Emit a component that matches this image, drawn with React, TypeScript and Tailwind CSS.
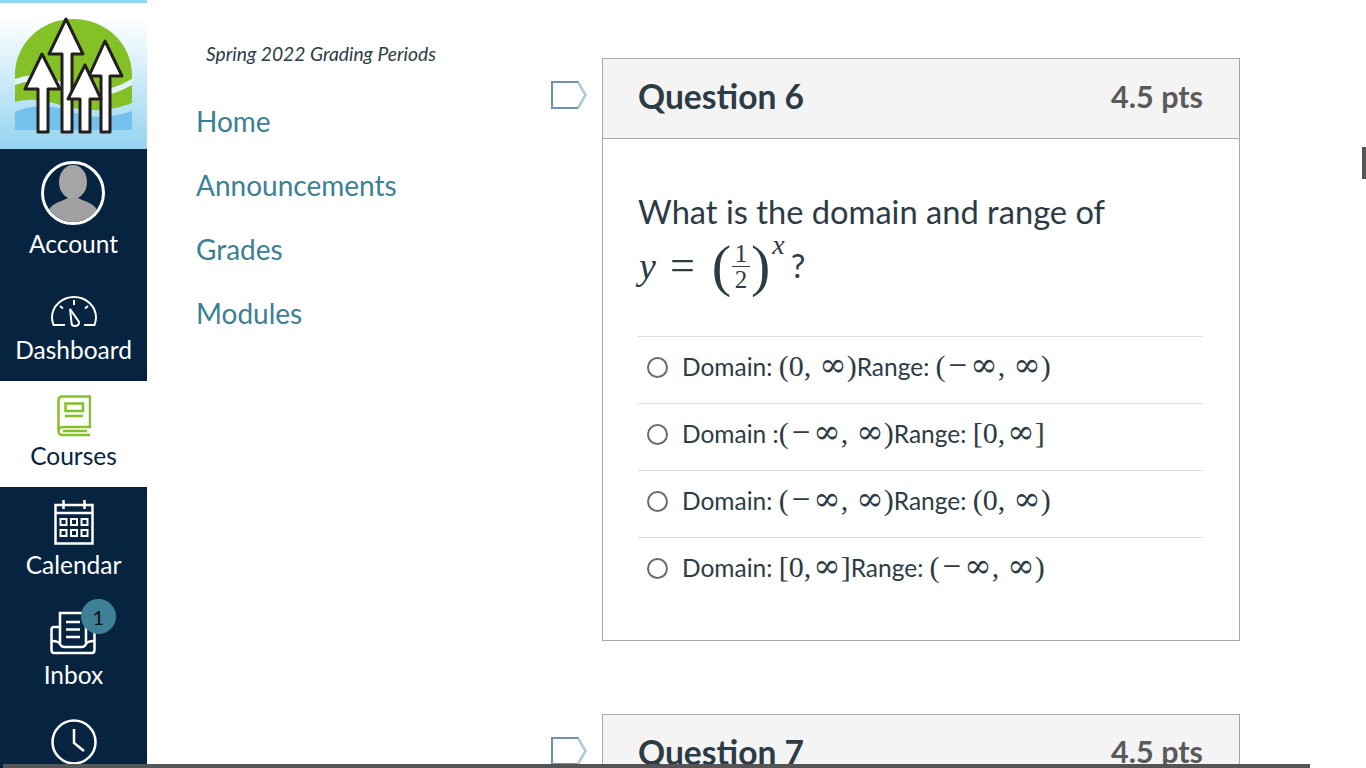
import React from 'react';

const Logo = () => (
    <svg width="147" height="146" viewBox="0 3 147 146">
        <path d="M15 102 V75 C15 45 40 19 73 19 C107 19 132 45 132 75 V103 C110 112 85 112 60 105 C45 100 30 98 15 102 Z" fill="#84c126" />
        <path d="M15 79 C35 71 55 78 72 87 C92 95 112 90 132 79 L132 85 C112 96 92 101 72 93 C55 84 35 77 15 85 Z" fill="#e2f3fb" />
        <path d="M15 112 C35 103 55 106 72 112 C92 119 112 118 132 111 V130 H15 Z" fill="#74c2ec" />
        <g fill="#fff" stroke="#231f20" strokeWidth="3" strokeLinejoin="round">
            <path d="M66 19 L83 54 H72 V132 H62 V54 L49 54 Z" />
            <path d="M105 41 L122 76 H110 V132 H101 V76 L89 76 Z" />
            <path d="M42 54 L60 89 H48 V132 H38 V89 L25 89 Z" />
            <path d="M85 65 L101 99 H90 V132 H80 V99 L68 99 Z" />
        </g>
    </svg>
);

const DashboardIcon = () => (
    <svg width="46" height="32" viewBox="0 0 46 32" fill="none" stroke="#fff" strokeWidth="2">
        <path d="M14 30 H2.500 C1.500 27 1 25 1 22.500 C1 11 11 2 23 2 C35 2 45 11 45 22.500 C45 25 44.500 27 43.500 30 H33" />
        <path d="M19 14 L28 27 C28.500 30 26 31 24 31 C21.500 31 20.500 29.500 20.500 27.500 Z" />
        <path d="M23 5 V10 M9 11 L12 13.500 M37 11 L34 13.500" />
    </svg>
);

const BookIcon = () => (
    <svg width="34" height="42" viewBox="0 0 34 42" fill="none" stroke="#84c126" strokeWidth="2.500">
        <path d="M1.500 35 V5 C1.500 3 3 1.500 5 1.500 H33 V32 H6 C3 32 1.500 34 1.500 36 C1.500 39 3 40 6 40 H33" />
        <path d="M8.500 8.500 H26 V16 H8.500 Z" />
        <path d="M8 21 H26 M6 36 H30" />
    </svg>
);

const CalendarIcon = () => (
    <svg width="40" height="46" viewBox="0 0 40 46" fill="none" stroke="#fff" strokeWidth="2.500">
        <path d="M1.500 6 H38.500 V44.500 H1.500 Z" />
        <path d="M9.500 1 V10 M30.500 1 V10 M1.500 14 H38.500" />
        <g strokeWidth="2">
            <rect x="6.500" y="20" width="6" height="6" />
            <rect x="17" y="20" width="6" height="6" />
            <rect x="27.500" y="20" width="6" height="6" />
            <rect x="6.500" y="31" width="6" height="6" />
            <rect x="17" y="31" width="6" height="6" />
            <rect x="27.500" y="31" width="6" height="6" />
        </g>
    </svg>
);

const InboxIcon = () => (
    <svg width="46" height="44" viewBox="0 0 46 44" fill="none" stroke="#fff" strokeWidth="2.500">
        <path d="M10 32 V2 H36 V32" />
        <path d="M9 16 H4 C2.500 16 1.500 17 1.500 18.500 V39 C1.500 41 2.500 42 4 42 H42 C43.500 42 44.500 41 44.500 39 V18.500 C44.500 17 43.500 16 42 16 H37" />
        <path d="M2 30 C6 30 9 31 10 33 C11 35 12 36 14 36 H32 C34 36 35 35 36 33 C37 31 40 30 44 30" />
        <path d="M16 11 H30 M16 18.500 H30 M16 26 H30" />
    </svg>
);

const ClockIcon = () => (
    <svg width="46" height="46" viewBox="0 0 46 46" fill="none" stroke="#fff" strokeWidth="2.500">
        <circle cx="23" cy="23" r="21.500" />
        <path d="M23 10 V24 L33 32" />
    </svg>
);

const Avatar = () => (
    <div className="w-[64px] h-[64px] rounded-full border-[3px] border-white overflow-hidden bg-[#06243f]">
        <svg width="58" height="58" viewBox="0 0 58 58">
            <ellipse cx="29" cy="18" rx="14" ry="17" fill="#a6a6a6" />
            <path d="M3 50 C6 39 16 38 24 34 H34 C42 38 52 39 55 50 L55 58 H3 Z" fill="#a0a0a0" />
        </svg>
    </div>
);

const Tag = () => (
    <svg width="36" height="28" viewBox="0 0 36 28" fill="none" className="mt-[23px] shrink-0">
        <path d="M1 1 H27 L34.500 14 L27 27 H1 Z" stroke="#6d93ad" strokeWidth="2" />
        <path d="M27 1 L34.500 14 L27 27" stroke="#b4cbdb" strokeWidth="2" />
    </svg>
);

const M = ({ children }: { children: React.ReactNode }) => (
    <span className="font-['Liberation_Serif',serif] text-[30px] leading-none">{children}</span>
);

const Inf = () => <span className="font-['DejaVu_Serif',serif] text-[33px] leading-none">∞</span>;

const Minus = () => <span className="font-['Liberation_Serif',serif] text-[33px] leading-none px-[3px]">−</span>;

const Comma = () => <span className="mr-[8px]">,</span>;

const TightComma = () => <span className="mr-[2px]">,</span>;

const answers = [
    <><span>Domain:&nbsp;</span><M>(0<Comma /><Inf />)</M><span>Range:&nbsp;</span><M>(<Minus /><Inf /><Comma /><Inf />)</M></>,
    <><span>Domain :</span><M>(<Minus /><Inf /><Comma /><Inf />)</M><span>Range:&nbsp;</span><M>[0<TightComma /><Inf />]</M></>,
    <><span>Domain:&nbsp;</span><M>(<Minus /><Inf /><Comma /><Inf />)</M><span>Range:&nbsp;</span><M>(0<Comma /><Inf />)</M></>,
    <><span>Domain:&nbsp;</span><M>[0<TightComma /><Inf />]</M><span>Range:&nbsp;</span><M>(<Minus /><Inf /><Comma /><Inf />)</M></>,
];

export default function App() {
    return (
        <div className="relative flex h-[768px] w-[1366px] overflow-hidden bg-white font-['Lato',sans-serif]">
            {/* Global nav */}
            <aside className="w-[147px] shrink-0 bg-[#06243f] text-white text-[24.500px] leading-[32px] flex flex-col items-center">
                <div className="w-full h-[149px] border-t-[3px] border-[#8fd8f2] bg-gradient-to-b from-white from-[10%] to-[#93d3f0]">
                    <Logo />
                </div>
                <div className="h-[122px] pt-[12px] flex flex-col items-center gap-[3px]">
                    <Avatar />
                    <span>Account</span>
                </div>
                <div className="h-[110px] pt-[24px] flex flex-col items-center gap-[7px]">
                    <DashboardIcon />
                    <span>Dashboard</span>
                </div>
                <div className="w-full h-[106px] pt-[14px] bg-white text-[#06243f] flex flex-col items-center gap-[3px]">
                    <BookIcon />
                    <span>Courses</span>
                </div>
                <div className="h-[110px] pt-[12px] flex flex-col items-center gap-[4px]">
                    <CalendarIcon />
                    <span>Calendar</span>
                </div>
                <div className="relative h-[108px] pt-[14px] flex flex-col items-center gap-[4px]">
                    <InboxIcon />
                    <span>Inbox</span>
                    <span className="absolute left-[37px] top-[2px] w-[35px] h-[35px] rounded-full bg-[#3d8097] text-[#101010] text-[20px] flex items-center justify-center">1</span>
                </div>
                <div className="pt-[14px]">
                    <ClockIcon />
                </div>
            </aside>

            {/* Course nav */}
            <nav className="w-[405px] shrink-0 pl-[49px] pt-[41px]">
                <p className="pl-[10px] italic text-[19.250px] leading-[26px] text-[#2d3b45]">Spring 2022 Grading Periods</p>
                <ul className="mt-[34px] flex flex-col gap-[24px] text-[28px] leading-[40px] text-[#3b8095]">
                    <li>Home</li>
                    <li>Announcements</li>
                    <li>Grades</li>
                    <li>Modules</li>
                </ul>
            </nav>

            {/* Quiz column */}
            <main className="pt-[58px] flex flex-col gap-[73px]">
                <div className="flex gap-[15px] ml-[-1px]">
                    <Tag />
                    <section className="w-[638px] h-[583px] border border-[#a8a8a8]">
                        <header className="h-[80px] pl-[35px] pr-[36px] pb-[4px] bg-[#f4f4f4] border-b border-[#a8a8a8] flex items-center justify-between">
                            <h2 className="text-[33.600px] font-bold text-[#2d3b45]">Question 6</h2>
                            <span className="text-[30.500px] font-bold text-[#5a5a5a]">4.5 pts</span>
                        </header>
                        <div className="pl-[35px] pr-[36px] pt-[48px]">
                            <p className="text-[32.650px] leading-[50px] text-[#2d3b45]">What is the domain and range of</p>
                            <div className="h-[58px] flex items-center text-[#2d3b45] font-['Liberation_Serif',serif] leading-none">
                                <i className="text-[38px] ml-[1px]">y</i>
                                <span className="text-[44px] ml-[14px] mr-[17px]">=</span>
                                <span className="text-[58px] leading-none">(</span>
                                <span className="mx-[1px] flex flex-col items-center text-[25px] leading-[25px]">
                                    <span className="w-[18px] border-b border-[#2d3b45] text-center">1</span>
                                    <span>2</span>
                                </span>
                                <span className="text-[58px] leading-none">)</span>
                                <i className="text-[28px] self-start mt-[-6px] ml-[2px]">x</i>
                                <span className="ml-[6px] text-[32.650px] font-['Lato',sans-serif]">?</span>
                            </div>
                            <ul className="mt-[41px] text-[24.500px] text-[#2d3b45]">
                                {answers.map((answer, i) => (
                                    <li key={i} className="h-[67px] border-t border-[#dddddd] flex items-center pl-[9px] pb-[6px]">
                                        <span className="w-[21px] h-[21px] rounded-full border-2 border-[#6b6b6b] mr-[14px] shrink-0" />
                                        <span className="flex items-baseline whitespace-pre">{answer}</span>
                                    </li>
                                ))}
                            </ul>
                        </div>
                    </section>
                </div>
                <div className="flex gap-[15px] ml-[-1px]">
                    <Tag />
                    <section className="w-[638px] h-[120px] border border-[#a8a8a8] bg-[#f4f4f4] pl-[35px] pr-[36px] pt-[12px] flex items-start justify-between">
                        <h2 className="text-[33.600px] font-bold text-[#2d3b45]">Question 7</h2>
                        <span className="mt-[2px] text-[30.500px] font-bold text-[#5a5a5a]">4.5 pts</span>
                    </section>
                </div>
            </main>

            {/* Scrollbars */}
            <div className="absolute left-[3px] bottom-0 w-[1307px] h-[4px] bg-[#555555]" />
            <div className="absolute right-0 top-[147px] w-[4px] h-[32px] bg-[#555555]" />
        </div>
    );
}
